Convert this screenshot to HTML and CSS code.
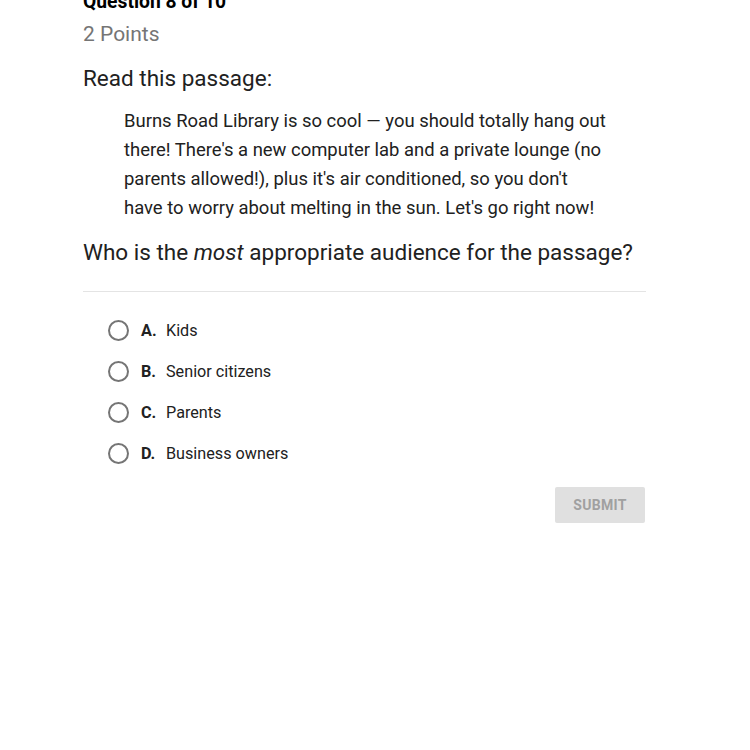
FILE: index.html
```html
<!DOCTYPE html>
<html>
<head>
<meta charset="utf-8">
<link rel="stylesheet" href="styles.css">
</head>
<body>
<div class="page">
  <div class="qnum">Question 8 of 10</div>
  <div class="points">2 Points</div>
  <div class="prompt">Read this passage:</div>
  <div class="passage">Burns Road Library is so cool — you should totally hang out<br>there! There's a new computer lab and a private lounge (no<br>parents allowed!), plus it's air conditioned, so you don't<br>have to worry about melting in the sun. Let's go right now!</div>
  <div class="question">Who is the <em>most</em> appropriate audience for the passage?</div>
  <div class="divider"></div>
  <ul class="options">
    <li class="option"><span class="radio"></span><span class="letter">A.</span><span class="text">Kids</span></li>
    <li class="option"><span class="radio"></span><span class="letter">B.</span><span class="text">Senior citizens</span></li>
    <li class="option"><span class="radio"></span><span class="letter">C.</span><span class="text">Parents</span></li>
    <li class="option"><span class="radio"></span><span class="letter">D.</span><span class="text">Business owners</span></li>
  </ul>
  <div class="actions"><button class="submit">SUBMIT</button></div>
</div>
</body>
</html>
```
FILE: styles.css
```css
html, body {
  margin: 0;
  padding: 0;
  background: #ffffff;
}
body {
  font-family: Roboto, "Noto Sans", sans-serif;
  color: #212121;
}
.page {
  width: 563px;
  margin-left: 83px;
  margin-top: -10px;
}
.qnum {
  font-size: 19.3px;
  line-height: 24px;
  font-weight: 700;
  color: #000;
}
.points {
  font-size: 21px;
  line-height: 28px;
  color: #757575;
  margin-top: 6px;
}
.prompt {
  font-size: 22.5px;
  line-height: 30px;
  margin-top: 15px;
  color: #212121;
}
.passage {
  font-size: 18.45px;
  line-height: 29px;
  margin: 14px 0 0 41px;
  width: 500px;
  color: #212121;
}
.question {
  font-size: 22.5px;
  line-height: 30px;
  margin-top: 14px;
}
.question em {
  font-style: italic;
}
.divider {
  height: 1px;
  background: #e4e4e4;
  margin-top: 24px;
}
.options {
  list-style: none;
  margin: 26px 0 0 0;
  padding: 0 0 0 25px;
  display: flex;
  flex-direction: column;
  gap: 17px;
}
.option {
  display: flex;
  align-items: center;
  height: 24px;
  font-size: 16.2px;
}
.radio {
  width: 17px;
  height: 17px;
  border: 2px solid #757575;
  border-radius: 50%;
  box-sizing: content-box;
  flex: none;
}
.letter {
  font-weight: 700;
  margin-left: 12px;
  width: 25px;
  color: #212121;
}
.text {
  color: #212121;
}
.actions {
  display: flex;
  justify-content: flex-end;
  margin-top: 22px;
  padding-right: 1px;
}
.submit {
  width: 90px;
  height: 36px;
  border: none;
  border-radius: 2px;
  background: #e0e0e0;
  color: #a0a0a0;
  font-family: Roboto, sans-serif;
  font-weight: 700;
  font-size: 14px;
  letter-spacing: 0.3px;
}
```
